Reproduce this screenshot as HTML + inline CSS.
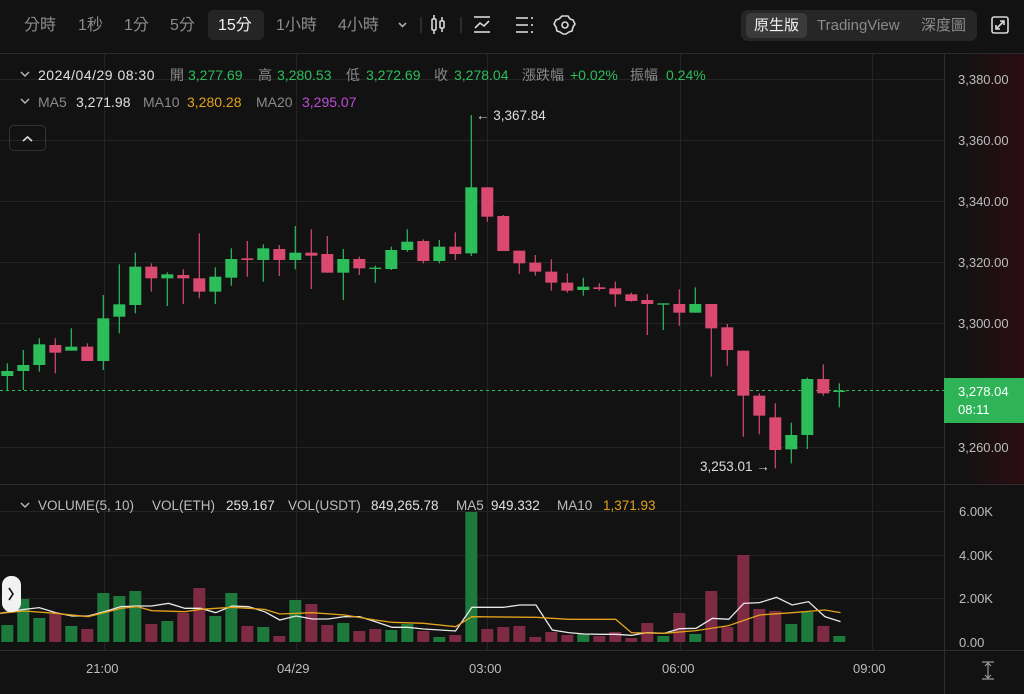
<!DOCTYPE html>
<html><head><meta charset="utf-8"><style>
*{margin:0;padding:0;box-sizing:border-box}
body{width:1024px;height:694px;background:#121212;overflow:hidden;font-family:"Liberation Sans","Noto Sans CJK TC",sans-serif;position:relative;color:#888}
.a{position:absolute;white-space:nowrap;line-height:18px}
.tb{font-size:16px;color:#8c8c8c;top:17px}
.g{fill:#2ebd5b}.r{fill:#da4a70}
.vg{fill:#1e7a3c}.vr{fill:#7e2a44}
.ax{font-size:13px;color:#bdbdbd}
.i{font-size:14px;color:#8a8a8a}
.v{font-size:13.5px;color:#bdbdbd;top:497px}
.w{color:#e0e0e0}.gn{color:#2ebd5b}.o{color:#e3a21a}
</style></head><body>
<svg class="a" style="left:0;top:0" width="1024" height="694">
<defs><linearGradient id="rg" x1="0" x2="1"><stop offset="0" stop-color="#121212"/><stop offset="1" stop-color="#2a0d12"/></linearGradient></defs>
<rect x="960" y="53" width="64" height="431" fill="url(#rg)"/>
<g stroke="#242424" stroke-width="1">
<line x1="0" y1="53.5" x2="1024" y2="53.5" stroke="#2a2a2a"/>
<line x1="0" y1="79.5" x2="944" y2="79.5"/><line x1="0" y1="140.5" x2="944" y2="140.5"/><line x1="0" y1="201.5" x2="944" y2="201.5"/><line x1="0" y1="262.5" x2="944" y2="262.5"/><line x1="0" y1="323.5" x2="944" y2="323.5"/><line x1="0" y1="447.5" x2="944" y2="447.5"/>
<line x1="0" y1="511.5" x2="944" y2="511.5"/><line x1="0" y1="555.5" x2="944" y2="555.5"/><line x1="0" y1="598.5" x2="944" y2="598.5"/>
<line x1="104.5" y1="54" x2="104.5" y2="650"/><line x1="296.5" y1="54" x2="296.5" y2="650"/><line x1="487.5" y1="54" x2="487.5" y2="650"/><line x1="680.5" y1="54" x2="680.5" y2="650"/><line x1="872.5" y1="54" x2="872.5" y2="650"/>
<line x1="0" y1="484.5" x2="1024" y2="484.5" stroke="#2e2e2e"/>
<line x1="0" y1="650.5" x2="1024" y2="650.5" stroke="#2e2e2e"/>
<line x1="944.5" y1="54" x2="944.5" y2="694" stroke="#2e2e2e"/>
</g>
<line x1="0" y1="390.5" x2="944" y2="390.5" stroke="#2ebd5b" stroke-dasharray="3,3"/>
<g transform="translate(0,100) scale(1,0.33333)">
<rect class="g" x="6.7" y="790" width="1.2" height="80"/><rect class="g" x="1.3" y="813" width="12" height="15"/>
<rect class="g" x="22.7" y="750" width="1.2" height="120"/><rect class="g" x="17.3" y="795" width="12" height="18"/>
<rect class="g" x="38.7" y="715" width="1.2" height="100"/><rect class="g" x="33.3" y="733" width="12" height="62"/>
<rect class="r" x="54.7" y="715" width="1.2" height="105"/><rect class="r" x="49.3" y="735" width="12" height="23"/>
<rect class="g" x="70.7" y="685" width="1.2" height="67"/><rect class="g" x="65.3" y="740" width="12" height="12"/>
<rect class="r" x="86.7" y="730" width="1.2" height="53"/><rect class="r" x="81.3" y="740" width="12" height="43"/>
<rect class="g" x="102.7" y="585" width="1.2" height="225"/><rect class="g" x="97.3" y="655" width="12" height="128"/>
<rect class="g" x="118.7" y="493" width="1.2" height="207"/><rect class="g" x="113.3" y="613" width="12" height="37"/>
<rect class="g" x="134.7" y="458" width="1.2" height="182"/><rect class="g" x="129.3" y="500" width="12" height="115"/>
<rect class="r" x="150.7" y="490" width="1.2" height="85"/><rect class="r" x="145.3" y="500" width="12" height="35"/>
<rect class="g" x="166.7" y="517" width="1.2" height="101"/><rect class="g" x="161.3" y="523" width="12" height="12"/>
<rect class="r" x="182.7" y="508" width="1.2" height="104"/><rect class="r" x="177.3" y="525" width="12" height="10"/>
<rect class="r" x="198.7" y="400" width="1.2" height="195"/><rect class="r" x="193.3" y="535" width="12" height="40"/>
<rect class="g" x="214.7" y="502" width="1.2" height="110"/><rect class="g" x="209.3" y="530" width="12" height="45"/>
<rect class="g" x="230.7" y="445" width="1.2" height="112"/><rect class="g" x="225.3" y="477" width="12" height="56"/>
<rect class="r" x="246.7" y="423" width="1.2" height="107"/><rect class="r" x="241.3" y="475" width="12" height="5"/>
<rect class="g" x="262.7" y="433" width="1.2" height="112"/><rect class="g" x="257.3" y="445" width="12" height="35"/>
<rect class="r" x="278.7" y="435" width="1.2" height="93"/><rect class="r" x="273.3" y="447" width="12" height="33"/>
<rect class="g" x="294.7" y="378" width="1.2" height="130"/><rect class="g" x="289.3" y="458" width="12" height="22"/>
<rect class="r" x="310.7" y="388" width="1.2" height="179"/><rect class="r" x="305.3" y="458" width="12" height="9"/>
<rect class="r" x="326.7" y="408" width="1.2" height="110"/><rect class="r" x="321.3" y="462" width="12" height="56"/>
<rect class="g" x="342.7" y="447" width="1.2" height="153"/><rect class="g" x="337.3" y="477" width="12" height="41"/>
<rect class="r" x="358.7" y="470" width="1.2" height="55"/><rect class="r" x="353.3" y="477" width="12" height="28"/>
<rect class="g" x="374.7" y="497" width="1.2" height="51"/><rect class="g" x="369.3" y="503" width="12" height="4"/>
<rect class="g" x="390.7" y="440" width="1.2" height="70"/><rect class="g" x="385.3" y="450" width="12" height="57"/>
<rect class="g" x="406.7" y="388" width="1.2" height="67"/><rect class="g" x="401.3" y="425" width="12" height="25"/>
<rect class="r" x="422.7" y="418" width="1.2" height="72"/><rect class="r" x="417.3" y="423" width="12" height="60"/>
<rect class="g" x="438.7" y="420" width="1.2" height="70"/><rect class="g" x="433.3" y="440" width="12" height="43"/>
<rect class="r" x="454.7" y="397" width="1.2" height="83"/><rect class="r" x="449.3" y="440" width="12" height="22"/>
<rect class="g" x="470.7" y="45" width="1.2" height="423"/><rect class="g" x="465.3" y="262" width="12" height="198"/>
<rect class="r" x="486.7" y="262" width="1.2" height="103"/><rect class="r" x="481.3" y="262" width="12" height="88"/>
<rect class="r" x="502.7" y="345" width="1.2" height="108"/><rect class="r" x="497.3" y="348" width="12" height="105"/>
<rect class="r" x="518.7" y="452" width="1.2" height="70"/><rect class="r" x="513.3" y="452" width="12" height="38"/>
<rect class="r" x="534.7" y="465" width="1.2" height="62"/><rect class="r" x="529.3" y="488" width="12" height="27"/>
<rect class="r" x="550.7" y="478" width="1.2" height="94"/><rect class="r" x="545.3" y="515" width="12" height="33"/>
<rect class="r" x="566.7" y="520" width="1.2" height="58"/><rect class="r" x="561.3" y="548" width="12" height="24"/>
<rect class="g" x="582.7" y="533" width="1.2" height="54"/><rect class="g" x="577.3" y="560" width="12" height="10"/>
<rect class="r" x="598.7" y="550" width="1.2" height="22"/><rect class="r" x="593.3" y="562" width="12" height="5"/>
<rect class="r" x="614.7" y="545" width="1.2" height="75"/><rect class="r" x="609.3" y="565" width="12" height="18"/>
<rect class="r" x="630.7" y="578" width="1.2" height="27"/><rect class="r" x="625.3" y="583" width="12" height="20"/>
<rect class="r" x="646.7" y="582" width="1.2" height="123"/><rect class="r" x="641.3" y="600" width="12" height="12"/>
<rect class="g" x="662.7" y="610" width="1.2" height="80"/><rect class="g" x="657.3" y="610" width="12" height="4"/>
<rect class="r" x="678.7" y="568" width="1.2" height="109"/><rect class="r" x="673.3" y="612" width="12" height="26"/>
<rect class="g" x="694.7" y="562" width="1.2" height="76"/><rect class="g" x="689.3" y="612" width="12" height="26"/>
<rect class="r" x="710.7" y="612" width="1.2" height="218"/><rect class="r" x="705.3" y="612" width="12" height="73"/>
<rect class="r" x="726.7" y="672" width="1.2" height="125"/><rect class="r" x="721.3" y="682" width="12" height="68"/>
<rect class="r" x="742.7" y="752" width="1.2" height="258"/><rect class="r" x="737.3" y="752" width="12" height="135"/>
<rect class="r" x="758.7" y="880" width="1.2" height="123"/><rect class="r" x="753.3" y="887" width="12" height="60"/>
<rect class="r" x="774.7" y="910" width="1.2" height="195"/><rect class="r" x="769.3" y="952" width="12" height="98"/>
<rect class="g" x="790.7" y="968" width="1.2" height="122"/><rect class="g" x="785.3" y="1005" width="12" height="43"/>
<rect class="g" x="806.7" y="833" width="1.2" height="214"/><rect class="g" x="801.3" y="837" width="12" height="168"/>
<rect class="r" x="822.7" y="793" width="1.2" height="94"/><rect class="r" x="817.3" y="837" width="12" height="43"/>
<rect class="g" x="838.7" y="850" width="1.2" height="72"/><rect class="g" x="833.3" y="872" width="12" height="4"/>
</g>
<g>
<rect class="vg" x="1.3" y="625" width="12" height="17"/><rect class="vg" x="17.3" y="599" width="12" height="43"/><rect class="vg" x="33.3" y="618" width="12" height="24"/><rect class="vr" x="49.3" y="614" width="12" height="28"/><rect class="vg" x="65.3" y="626" width="12" height="16"/><rect class="vr" x="81.3" y="629" width="12" height="13"/><rect class="vg" x="97.3" y="593" width="12" height="49"/><rect class="vg" x="113.3" y="596" width="12" height="46"/><rect class="vg" x="129.3" y="591" width="12" height="51"/><rect class="vr" x="145.3" y="624" width="12" height="18"/><rect class="vg" x="161.3" y="621" width="12" height="21"/><rect class="vr" x="177.3" y="613" width="12" height="29"/><rect class="vr" x="193.3" y="588" width="12" height="54"/><rect class="vg" x="209.3" y="616" width="12" height="26"/><rect class="vg" x="225.3" y="593" width="12" height="49"/><rect class="vr" x="241.3" y="626" width="12" height="16"/><rect class="vg" x="257.3" y="627" width="12" height="15"/><rect class="vr" x="273.3" y="636" width="12" height="6"/><rect class="vg" x="289.3" y="600" width="12" height="42"/><rect class="vr" x="305.3" y="604" width="12" height="38"/><rect class="vr" x="321.3" y="625" width="12" height="17"/><rect class="vg" x="337.3" y="623" width="12" height="19"/><rect class="vr" x="353.3" y="631" width="12" height="11"/><rect class="vr" x="369.3" y="629" width="12" height="13"/><rect class="vg" x="385.3" y="630" width="12" height="12"/><rect class="vg" x="401.3" y="624" width="12" height="18"/><rect class="vr" x="417.3" y="631" width="12" height="11"/><rect class="vg" x="433.3" y="637" width="12" height="5"/><rect class="vr" x="449.3" y="635" width="12" height="7"/><rect class="vg" x="465.3" y="512" width="12" height="130"/><rect class="vr" x="481.3" y="629" width="12" height="13"/><rect class="vr" x="497.3" y="627" width="12" height="15"/><rect class="vr" x="513.3" y="626" width="12" height="16"/><rect class="vr" x="529.3" y="637" width="12" height="5"/><rect class="vr" x="545.3" y="632" width="12" height="10"/><rect class="vr" x="561.3" y="635" width="12" height="7"/><rect class="vg" x="577.3" y="634" width="12" height="8"/><rect class="vr" x="593.3" y="636" width="12" height="6"/><rect class="vr" x="609.3" y="632" width="12" height="10"/><rect class="vr" x="625.3" y="638" width="12" height="4"/><rect class="vr" x="641.3" y="623" width="12" height="19"/><rect class="vg" x="657.3" y="636" width="12" height="6"/><rect class="vr" x="673.3" y="613" width="12" height="29"/><rect class="vg" x="689.3" y="634" width="12" height="8"/><rect class="vr" x="705.3" y="591" width="12" height="51"/><rect class="vr" x="721.3" y="627" width="12" height="15"/><rect class="vr" x="737.3" y="555" width="12" height="87"/><rect class="vr" x="753.3" y="609" width="12" height="33"/><rect class="vr" x="769.3" y="611" width="12" height="31"/><rect class="vg" x="785.3" y="624" width="12" height="18"/><rect class="vg" x="801.3" y="612" width="12" height="30"/><rect class="vr" x="817.3" y="626" width="12" height="16"/><rect class="vg" x="833.3" y="636" width="12" height="6"/>
</g>
<g transform="translate(0,480) scale(0.6536,0.33333)" fill="none" stroke-width="1.3">
<polyline vector-effect="non-scaling-stroke" stroke="#e8e8e8" points="0,400 37,388 60,383 85,398 110,408 135,408 160,395 185,380 210,378 232,378 258,370 283,385 307,385 330,398 355,378 380,380 405,395 428,420 453,408 478,417 502,417 527,410 550,410 574,425 600,442 624,442 648,447 673,450 697,453 722,382 745,382 770,382 795,375 820,375 845,450 870,458 894,462 918,463 942,463 966,466 990,458 1016,460 1040,446 1065,445 1090,415 1115,418 1138,370 1162,368 1188,352 1212,375 1237,365 1262,410 1286,425"/>
<polyline vector-effect="non-scaling-stroke" stroke="#e3a21a" points="0,400 37,393 85,400 135,410 185,385 210,380 232,392 283,395 307,388 355,382 405,388 428,402 478,398 527,405 574,420 600,427 648,430 697,440 722,410 820,412 870,418 942,418 966,458 1016,460 1065,452 1115,437 1162,405 1212,398 1262,390 1286,398"/>
</g>
<rect x="944" y="378" width="80" height="45" fill="#2eb457"/>
<g stroke="#d8d8d8" stroke-width="1.6" fill="none">
<path d="M399 23l3.5 3.5 3.5-3.5" stroke="#aaa"/>
<line x1="421" y1="17" x2="421" y2="33" stroke="#333"/>
<rect x="432" y="19" width="4" height="11" rx="1"/><line x1="434" y1="15" x2="434" y2="19"/><line x1="434" y1="30" x2="434" y2="34"/>
<rect x="440" y="21" width="4" height="7" rx="1"/><line x1="442" y1="17" x2="442" y2="21"/><line x1="442" y1="28" x2="442" y2="32"/>
<line x1="461" y1="17" x2="461" y2="33" stroke="#333"/>
<line x1="474" y1="17" x2="490" y2="17"/><line x1="474" y1="32" x2="490" y2="32"/><path d="M475 28l5-5 4 3 5-5"/>
<line x1="516" y1="18" x2="528" y2="18"/><line x1="516" y1="25" x2="528" y2="25"/><line x1="516" y1="32" x2="528" y2="32"/>
<line x1="531" y1="18" x2="533" y2="18"/><line x1="531" y1="25" x2="533" y2="25"/><line x1="531" y1="32" x2="533" y2="32"/>
<path d="M562 16h6l2 3 3 1 2 4-2 3-1 4-3 1-3 2h-3l-3-2-3-1-1-4-2-3 2-4 3-1z" stroke-linejoin="round"/><circle cx="565" cy="25" r="3"/>
<rect x="992" y="17" width="16" height="16" rx="2"/><path d="M996 29l8-8M1000 21h4v4M996 25v4h4"/>
<path d="M21 72l4 4 4-4M21 99l4 4 4-4M21 503l4 4 4-4" stroke="#bbb" stroke-width="1.4"/>
<rect x="9.5" y="125.5" width="36" height="25" rx="4" stroke="#333" stroke-width="1"/>
<path d="M23 141l4.5-4 4.5 4" stroke="#ddd"/>
<path d="M982 662h12M982 679h12M988 663v15M985 666l3-3 3 3M985 675l3 3 3-3" stroke="#999" stroke-width="1.2"/>
</g>
<rect x="2" y="576" width="19" height="36" rx="9" fill="#f2f2f2"/>
<path d="M9 588l4 6-4 6" stroke="#111" stroke-width="1.6" fill="none"/>
</svg>
<div class="a" style="left:208px;top:10px;width:56px;height:30px;background:#252525;border-radius:5px"></div>
<div class="a tb" style="left:24px">分時</div>
<div class="a tb" style="left:78px">1秒</div>
<div class="a tb" style="left:124px">1分</div>
<div class="a tb" style="left:170px">5分</div>
<div class="a tb" style="left:218px;color:#f0f0f0">15分</div>
<div class="a tb" style="left:276px">1小時</div>
<div class="a tb" style="left:338px">4小時</div>
<div class="a" style="left:741px;top:10px;width:236px;height:31px;background:#262626;border-radius:7px"></div>
<div class="a" style="left:746px;top:13px;width:61px;height:25px;background:#3a3a3a;border-radius:5px"></div>
<div class="a" style="left:754px;top:17px;font-size:15px;color:#f0f0f0">原生版</div>
<div class="a" style="left:817px;top:17px;font-size:15px;color:#8a8a8a">TradingView</div>
<div class="a" style="left:921px;top:17px;font-size:15px;color:#8a8a8a">深度圖</div>

<div class="a i w" style="left:38px;top:66px;letter-spacing:0.5px">2024/04/29 08:30</div>
<div class="a i" style="left:170px;top:66px">開</div><div class="a i gn" style="left:188px;top:66px">3,277.69</div>
<div class="a i" style="left:258px;top:66px">高</div><div class="a i gn" style="left:277px;top:66px">3,280.53</div>
<div class="a i" style="left:346px;top:66px">低</div><div class="a i gn" style="left:366px;top:66px">3,272.69</div>
<div class="a i" style="left:434px;top:66px">收</div><div class="a i gn" style="left:454px;top:66px">3,278.04</div>
<div class="a i" style="left:522px;top:66px">漲跌幅</div><div class="a i gn" style="left:570px;top:66px">+0.02%</div>
<div class="a i" style="left:630px;top:66px">振幅</div><div class="a i gn" style="left:666px;top:66px">0.24%</div>

<div class="a i" style="left:38px;top:93px">MA5</div><div class="a i w" style="left:76px;top:93px">3,271.98</div>
<div class="a i" style="left:143px;top:93px">MA10</div><div class="a i o" style="left:187px;top:93px">3,280.28</div>
<div class="a i" style="left:256px;top:93px">MA20</div><div class="a i" style="left:302px;top:93px;color:#c04bd8">3,295.07</div>

<div class="a v" style="left:38px">VOLUME(5, 10)</div>
<div class="a v" style="left:152px">VOL(ETH)</div><div class="a v w" style="left:226px">259.167</div>
<div class="a v" style="left:288px">VOL(USDT)</div><div class="a v w" style="left:371px">849,265.78</div>
<div class="a v" style="left:456px">MA5</div><div class="a v w" style="left:491px">949.332</div>
<div class="a v" style="left:557px">MA10</div><div class="a v o" style="left:603px">1,371.93</div>

<div class="a" style="left:476px;top:107px;font-size:13.5px;color:#ddd">← 3,367.84</div>
<div class="a" style="left:700px;top:458px;font-size:13.5px;color:#ddd">3,253.01 →</div>
<div class="a ax" style="left:958px;top:71px">3,380.00</div>
<div class="a ax" style="left:958px;top:132px">3,360.00</div>
<div class="a ax" style="left:958px;top:193px">3,340.00</div>
<div class="a ax" style="left:958px;top:254px">3,320.00</div>
<div class="a ax" style="left:958px;top:315px">3,300.00</div>
<div class="a ax" style="left:958px;top:439px">3,260.00</div>
<div class="a" style="left:958px;top:383px;font-size:13px;color:#fff;line-height:18px">3,278.04<br>08:11</div>
<div class="a ax" style="left:959px;top:503px">6.00K</div>
<div class="a ax" style="left:959px;top:547px">4.00K</div>
<div class="a ax" style="left:959px;top:590px">2.00K</div>
<div class="a ax" style="left:959px;top:634px">0.00</div>
<div class="a ax" style="left:86px;top:660px">21:00</div>
<div class="a ax" style="left:277px;top:660px">04/29</div>
<div class="a ax" style="left:469px;top:660px">03:00</div>
<div class="a ax" style="left:662px;top:660px">06:00</div>
<div class="a ax" style="left:853px;top:660px">09:00</div>
</body></html>
